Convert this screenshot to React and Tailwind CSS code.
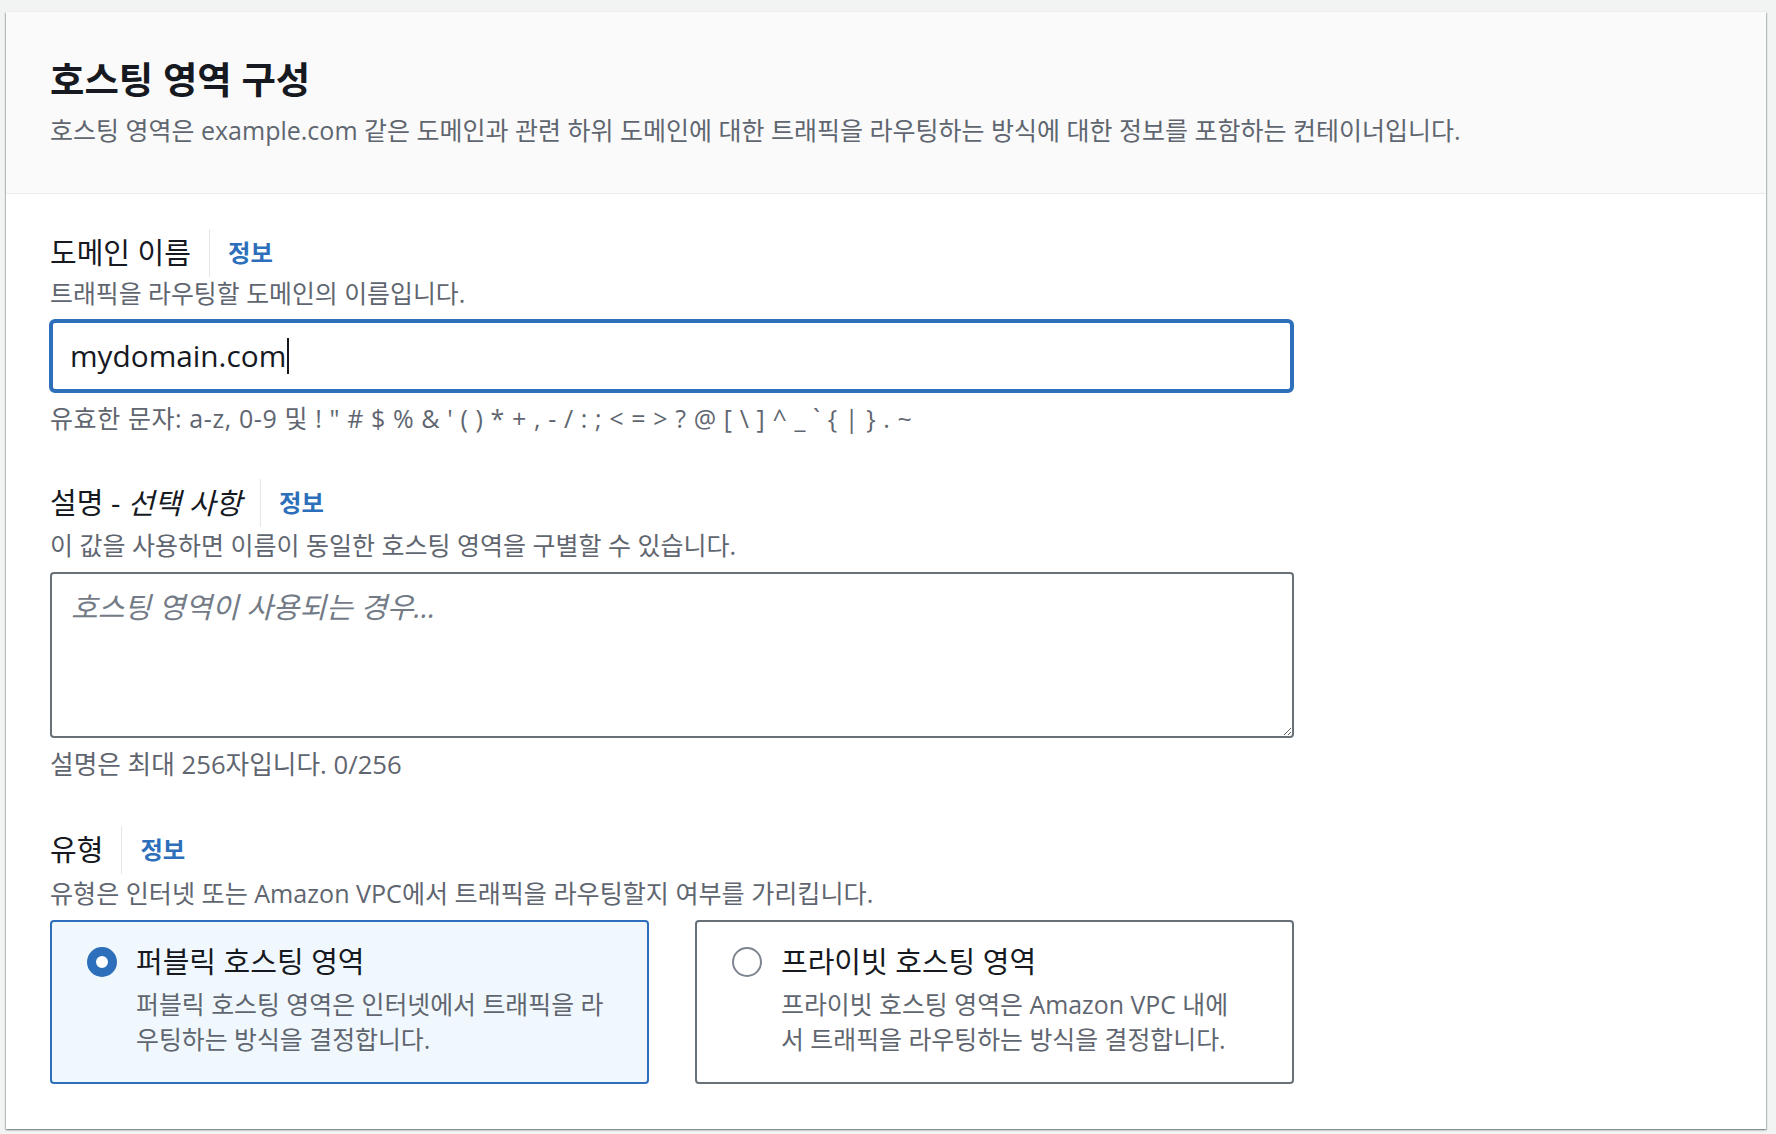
import React from 'react'

const FONT = "font-['Open_Sans','Noto_Sans_CJK_KR',sans-serif]"

function FieldLabel({ children }) {
  return (
    <div className="flex items-center h-[48px]">
      <span className="text-[29px] leading-[34px] text-[#16191f]">{children}</span>
      <span className="ml-[18px] h-[48px] border-l border-[#e4e7e9]" />
      <a className="ml-[18px] text-[24.4px] leading-[30px] font-bold text-[#2d6fba]">정보</a>
    </div>
  )
}

function Radio({ checked }) {
  if (checked) {
    return <span className="shrink-0 w-[30px] h-[30px] rounded-full border-[9px] border-[#2d6fba] bg-white" />
  }
  return <span className="shrink-0 w-[30px] h-[30px] rounded-full border-2 border-[#7d8590] bg-white" />
}

function Tile({ checked, title, lines }) {
  return (
    <div className={
      checked
        ? 'rounded-[4px] border-2 border-[#2d6fba] bg-[#f1f8fd] pl-[35px] pr-[30px] pt-[23px] pb-[25px]'
        : 'rounded-[4px] border-2 border-[#687078] bg-white pl-[35px] pr-[30px] pt-[23px] pb-[25px]'
    }>
      <div className="flex items-center gap-[19px]">
        <Radio checked={checked} />
        <span className="text-[29px] leading-[34px] text-[#16191f]">{title}</span>
      </div>
      <div className="mt-[8px] pl-[49px] text-[24.9px] leading-[35px] text-[#5f6670]">
        {lines.map(l => <div key={l} className="whitespace-nowrap">{l}</div>)}
      </div>
    </div>
  )
}

export default function App() {
  return (
    <div className={`${FONT} min-h-screen bg-[#f2f3f3] pt-[12px] pl-[6px] pr-[10px]`}>
      <div className="bg-white shadow-[0_1px_2px_0_rgba(0,28,36,0.35),1px_1px_1px_0_rgba(0,28,36,0.15),-1px_1px_1px_0_rgba(0,28,36,0.15)]">

        {/* Header */}
        <div className="bg-[#fafafa] border-b border-[#eaeded] pl-[44px] pt-[48px] pb-[47px]">
          <h2 className="text-[37.4px] leading-[40px] font-bold text-[#16191f]">호스팅 영역 구성</h2>
          <p className="mt-[14px] text-[25px] leading-[32px] text-[#5f6670]">
            호스팅 영역은 example.com 같은 도메인과 관련 하위 도메인에 대한 트래픽을 라우팅하는 방식에 대한 정보를 포함하는 컨테이너입니다.
          </p>
        </div>

        {/* Body */}
        <div className="pl-[44px] pt-[35px] pb-[45px]">
          <div className="w-[1244px]">

            <FieldLabel>도메인 이름</FieldLabel>
            <p className="mt-[1px] text-[24.9px] leading-[30px] text-[#5f6670]">트래픽을 라우팅할 도메인의 이름입니다.</p>
            <div className="mt-[11px] -ml-[1px] h-[74px] rounded-[6px] border-[4px] border-[#2d6fba] flex items-center pl-[17px]">
              <span className="text-[29.8px] leading-[36px] text-[#16191f]">mydomain.com</span>
              <span className="ml-[1px] w-[2px] h-[36px] bg-[#16191f]" />
            </div>
            <p className="mt-[10px] text-[25px] leading-[30px] tracking-[0.6px] text-[#5f6670]">
              유효한 문자: a-z, 0-9 및 ! " # $ % &amp; ' ( ) * + , - / : ; &lt; = &gt; ? @ [ \ ] ^ _ ` {'{'} | {'}'} . ~
            </p>

            <div className="mt-[46px]">
              <FieldLabel>설명 - <i>선택 사항</i></FieldLabel>
            </div>
            <p className="mt-[3px] text-[25px] leading-[30px] text-[#5f6670]">이 값을 사용하면 이름이 동일한 호스팅 영역을 구별할 수 있습니다.</p>
            <textarea
              readOnly
              placeholder="호스팅 영역이 사용되는 경우..."
              className="mt-[12px] block w-full h-[166px] rounded-[4px] border-2 border-[#687078] px-[19px] pt-[15px] text-[29px] leading-[36px] placeholder:italic placeholder:text-[#737b86] outline-none"
            />
            <p className="mt-[12px] text-[25.7px] leading-[30px] text-[#5f6670]">설명은 최대 256자입니다. 0/256</p>

            <div className="mt-[46px]">
              <FieldLabel>유형</FieldLabel>
            </div>
            <p className="mt-[4px] text-[25.1px] leading-[30px] text-[#5f6670]">유형은 인터넷 또는 Amazon VPC에서 트래픽을 라우팅할지 여부를 가리킵니다.</p>

            <div className="mt-[12px] grid grid-cols-2 gap-[46px]">
              <Tile
                checked
                title="퍼블릭 호스팅 영역"
                lines={['퍼블릭 호스팅 영역은 인터넷에서 트래픽을 라', '우팅하는 방식을 결정합니다.']}
              />
              <Tile
                title="프라이빗 호스팅 영역"
                lines={['프라이빗 호스팅 영역은 Amazon VPC 내에', '서 트래픽을 라우팅하는 방식을 결정합니다.']}
              />
            </div>
          </div>
        </div>
      </div>
    </div>
  )
}
